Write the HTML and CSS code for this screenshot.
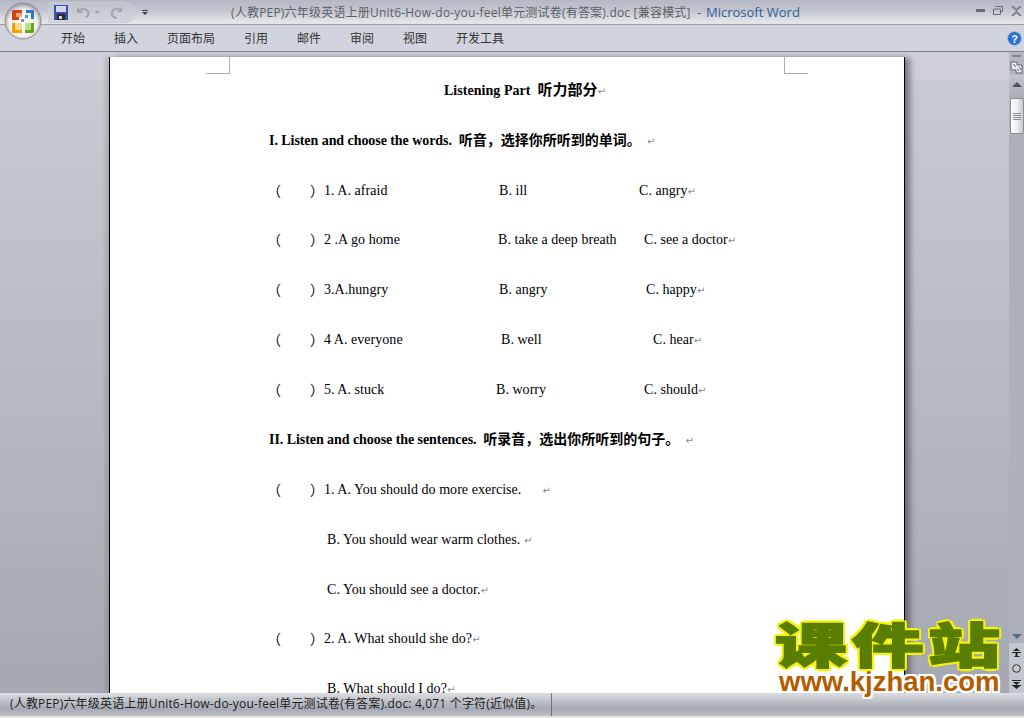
FILE: index.html
```html
<!DOCTYPE html>
<html lang="zh-CN">
<head>
  <meta charset="UTF-8">
  <title>Microsoft Word</title>
  <link rel="stylesheet" href="styles.css">
</head>
<body>
  <!-- Office button sits over title bar and ribbon -->
  <div class="office-btn">
    <svg width="38" height="38" viewBox="0 0 38 38">
      <defs>
        <radialGradient id="orb" cx="50%" cy="55%" r="55%">
          <stop offset="0" stop-color="#ffffff"/>
          <stop offset="0.7" stop-color="#f1f1ee"/>
          <stop offset="1" stop-color="#8d9099"/>
        </radialGradient>
      </defs>
      <circle cx="19" cy="19" r="18" fill="url(#orb)" stroke="#8f929a"/>
      <path d="M9 8h9v3h-6v4h3v3H8V9z" fill="#d2410f"/>
      <path d="M12 11h6v4h-6z" fill="#f0a37c"/>
      <path d="M22 8h7l1 1v8h-3v-6h-5z" fill="#2f74c9"/>
      <path d="M21 13h3v3h-3zM17 17h3v3h-3z" fill="#5a9bd8"/>
      <path d="M8 21h3v7h7v3H9l-1-1z" fill="#f2a20c"/>
      <path d="M11 21h7v7h-7z" fill="#fbd98a"/>
      <path d="M27 21h3v9l-1 1h-8v-3h6z" fill="#65a51f"/>
      <path d="M21 21h6v7h-6z" fill="#bcdd8c"/>
    </svg>
  </div>

  <header class="titlebar">
    <div class="qat">
      <svg class="ico-save" width="14" height="15" viewBox="0 0 14 15">
        <rect width="14" height="15" fill="#3e4fa8"/>
        <rect x="2" y="1" width="10" height="6" fill="#cfd8ee"/>
        <rect x="3" y="9" width="8" height="6" fill="#2a2a30"/>
        <rect x="5" y="11" width="3" height="3" fill="#d8d8d8"/>
      </svg>
      <svg class="ico-undo" width="14" height="13" viewBox="0 0 14 13">
        <path d="M1 1v6h6L5 5c2-1.500 5-1 6 1 .8 2-.4 4-2 5l2 1c2.500-1.500 3.500-4.500 2-7C11 2 7 1 3.500 3z" fill="#a2a5ae"/>
      </svg>
      <span class="caret"></span>
      <svg class="ico-redo" width="13" height="13" viewBox="0 0 13 13">
        <path d="M12 0v6H7l2-2C7 3 3.500 4 3 6.500 2.600 9 4.500 11 7 11v2C3 13 0 10 1 6c.8-3.800 6-5.600 9.500-3.300z" fill="#a2a5ae"/>
      </svg>
    </div>
    <div class="qat-more"><span class="bar"></span><span class="caret dark"></span></div>
    <div class="doc-title">(人教PEP)六年级英语上册Unit6-How-do-you-feel单元测试卷(有答案).doc [兼容模式]  -  <span class="app-name">Microsoft Word</span></div>
    <div class="win-ctrls">
      <svg width="9" height="3" viewBox="0 0 9 3"><rect width="9" height="3" fill="#6b6e75"/></svg>
      <svg width="10" height="9" viewBox="0 0 10 9"><path d="M2.500.5h7v5h-2M.5 3h7v5.500h-7z" fill="none" stroke="#6b6e75"/></svg>
      <svg width="11" height="10" viewBox="0 0 11 10"><path d="M1 0l4.500 4L10 0M1 10l4.500-4 4.500 4" fill="none" stroke="#7c8087" stroke-width="2"/></svg>
    </div>
  </header>

  <nav class="ribbon">
    <a>开始</a>
    <a>插入</a>
    <a>页面布局</a>
    <a>引用</a>
    <a>邮件</a>
    <a>审阅</a>
    <a>视图</a>
    <a>开发工具</a>
    <svg class="help" width="15" height="15" viewBox="0 0 15 15">
      <circle cx="7.500" cy="7.500" r="7" fill="#2a6fd6" stroke="#a9c3e8"/>
      <text x="7.500" y="11.500" text-anchor="middle" class="help-q">?</text>
    </svg>
  </nav>

  <div class="workspace">
    <div class="doc-area">
      <main class="page">
        <span class="crop crop-left"></span>
        <span class="crop crop-right"></span>

        <p class="line title">Listening Part  <span class="cjk big">听力部分</span><span class="mark">↵</span></p>
        <p class="line bold">I. Listen and choose the words.  <span class="cjk">听音，选择你所听到的单词。</span><span class="mark">  ↵</span></p>

        <div class="line q q1"><span class="par">（<span>）</span></span><span>1. A. afraid</span><span>B. ill</span><span>C. angry<span class="mark">↵</span></span></div>
        <div class="line q q2"><span class="par">（<span>）</span></span><span>2 .A go home</span><span>B. take a deep breath</span><span>C. see a doctor<span class="mark">↵</span></span></div>
        <div class="line q q3"><span class="par">（<span>）</span></span><span>3.A.hungry</span><span>B. angry</span><span>C. happy<span class="mark">↵</span></span></div>
        <div class="line q q4"><span class="par">（<span>）</span></span><span>4 A. everyone</span><span>B. well</span><span>C. hear<span class="mark">↵</span></span></div>
        <div class="line q q5"><span class="par">（<span>）</span></span><span>5. A. stuck</span><span>B. worry</span><span>C. should<span class="mark">↵</span></span></div>

        <p class="line bold">II. Listen and choose the sentences.  <span class="cjk">听录音，选出你所听到的句子。</span><span class="mark">  ↵</span></p>

        <div class="line q"><span class="par">（<span>）</span></span><span>1. A. You should do more exercise.      <span class="mark">↵</span></span></div>
        <p class="line sub">B. You should wear warm clothes. <span class="mark">↵</span></p>
        <p class="line sub">C. You should see a doctor.<span class="mark">↵</span></p>
        <div class="line q"><span class="par">（<span>）</span></span><span>2. A. What should she do?<span class="mark">↵</span></span></div>
        <p class="line sub tight">B. What should I do?<span class="mark">↵</span></p>
      </main>
    </div>

    <aside class="scrollbar">
      <span class="split"></span>
      <svg class="ruler-btn" width="13" height="13" viewBox="0 0 13 13">
        <path d="M1 1h6v3h5v8H6V9H1z" fill="#e9e7f0" stroke="#5f626b"/>
        <path d="M3 3l3 3M9 6l2 3M7 8l2 2" stroke="#5f626b"/>
      </svg>
      <div class="sb-up"><span class="tri-up"></span></div>
      <div class="sb-thumb"><span class="grip"></span></div>
      <div class="sb-track"></div>
      <div class="sb-down"><span class="tri-down"></span></div>
      <div class="sb-browse">
        <svg width="9" height="9" viewBox="0 0 9 9"><path d="M4.500 0L8 3H1zM0 4h9v1H0zM3.500 5h2v3h2v1h-5V8h1z" fill="#222"/></svg>
        <svg width="9" height="9" viewBox="0 0 9 9"><circle cx="4.500" cy="4.500" r="3.800" fill="#c9c9c9" stroke="#333"/></svg>
        <svg width="9" height="9" viewBox="0 0 9 9"><path d="M0 0h9v1H0zM1 2h7L4.500 5zM0 5h9v1H0zM1 6h7L4.500 9z" fill="#222"/></svg>
      </div>
    </aside>
  </div>

  <footer class="statusbar">
    <div class="status-text">(人教PEP)六年级英语上册Unit6-How-do-you-feel单元测试卷(有答案).doc: 4,071 个字符(近似值)。</div>
  </footer>

  <!-- site watermark over the screenshot -->
  <div class="watermark">
    <div class="wm-cn">课件站</div>
    <div class="wm-url">www.kjzhan.com</div>
  </div>
</body>
</html>
```

FILE: styles.css
```css
* {
  margin: 0;
  padding: 0;
  box-sizing: border-box;
}

body {
  position: relative;
  display: flex;
  flex-direction: column;
  width: 1024px;
  height: 718px;
  overflow: hidden;
  font-family: "Liberation Serif", "Noto Sans CJK SC", serif;
  background-color: #e6e4dc;
  color: #000;
}

/* Office orb */
.office-btn {
  position: absolute;
  left: 4px;
  top: 2px;
  width: 38px;
  height: 38px;
}

/* Title bar */
.titlebar {
  display: flex;
  align-items: center;
  height: 25px;
  flex-shrink: 0;
  background: linear-gradient(#b4b8c2, #c3c6cf 45%, #e2e4e8 90%);
  border-bottom: 1px solid #9a9da5;
  font-family: "Open Sans", "Noto Sans CJK SC", sans-serif;
}

.qat {
  display: flex;
  align-items: center;
  width: 88px;
  height: 21px;
  margin-left: 48px;
  padding-left: 6px;
  border: 1px solid #c9ccd3;
  border-left: 0;
  border-radius: 0 11px 11px 0;
  background: linear-gradient(#c0c3cd, #d3d6dc);
}

.ico-undo {
  margin-left: 8px;
}

.caret {
  width: 0;
  height: 0;
  margin-left: 4px;
  border: 3px solid transparent;
  border-top: 3px solid #a2a5ae;
  border-bottom: 0;
}

.caret.dark {
  display: block;
  margin: 1px 0 0;
  border-top-color: #444;
}

.ico-redo {
  margin-left: 10px;
}

.qat-more {
  width: 6px;
  margin-left: 6px;
}

.qat-more .bar {
  display: block;
  height: 1px;
  background-color: #444;
}

.doc-title {
  flex: 1;
  margin-left: 83px;
  font-size: 12px;
  letter-spacing: 0.2px;
  color: #5c5f66;
  white-space: pre;
}

.app-name {
  margin-left: -2px;
  font-size: 13px;
  letter-spacing: 0;
  color: #2f5f9e;
}

.win-ctrls {
  display: flex;
  align-items: center;
  gap: 8px;
  padding-right: 2px;
  padding-bottom: 3px;
}

/* Ribbon tabs */
.ribbon {
  display: flex;
  align-items: center;
  gap: 29px;
  height: 27px;
  flex-shrink: 0;
  padding-left: 61px;
  padding-bottom: 2px;
  background-color: #d1d4dc;
  border-bottom: 1px solid #7f8389;
  font-family: "Noto Sans CJK SC", sans-serif;
  font-size: 12px;
  color: #333;
}

.help {
  margin-left: auto;
  margin-right: 2px;
  margin-top: 2px;
}

.help-q {
  font-family: "Liberation Sans", sans-serif;
  font-size: 11px;
  font-weight: bold;
  fill: #fff;
}

/* Document area */
.workspace {
  display: flex;
  flex: 1;
  min-height: 0;
}

.doc-area {
  flex: 1;
  min-width: 0;
  overflow: hidden;
  padding: 5px 0 0 109px;
  background:
    linear-gradient(#d0cfd9, #d0cfd9) top / 100% 28px no-repeat,
    linear-gradient(#c8ccd4, #a5a8b1);
}

.page {
  position: relative;
  width: 796px;
  height: 700px;
  padding: 8px 123px 0 159px;
  background-color: #fff;
  border-left: 1px solid #000;
  border-right: 1px solid #000;
  box-shadow: 6px 0 6px -1px rgba(50, 50, 60, 0.55), -4px 0 3px rgba(70, 70, 80, 0.18);
  font-size: 14px;
  letter-spacing: 0.04px;
}

.crop {
  position: absolute;
  top: 0;
  width: 24px;
  height: 17px;
  border-bottom: 1px solid #abaeb6;
}

.crop-left {
  left: 96px;
  border-right: 1px solid #abaeb6;
}

.crop-right {
  left: 674px;
  border-left: 1px solid #abaeb6;
}

.line {
  height: 49.83px;
  line-height: 49.83px;
  white-space: pre;
}

.title {
  padding-top: 1px;
  font-weight: bold;
  text-align: center;
}

.bold {
  font-weight: bold;
  letter-spacing: -0.06px;
}

.cjk {
  font-family: "Noto Sans CJK SC", sans-serif;
  letter-spacing: 0;
}

.cjk.big {
  font-size: 15px;
  line-height: 0;
}

.mark {
  font-family: "DejaVu Sans", sans-serif;
  font-size: 10px;
  font-weight: normal;
  color: #8b8b8b;
}

/* question rows: columns shift a little per row, as in the doc */
.q {
  display: grid;
  grid-template-columns: 55px auto;
  justify-content: start;
  padding-top: 1px;
}

.q1 { grid-template-columns: 55px 175px 140px auto; }
.q2 { grid-template-columns: 55px 174px 146px auto; }
.q3 { grid-template-columns: 55px 175px 147px auto; }
.q4 { grid-template-columns: 55px 177px 152px auto; }
.q5 { grid-template-columns: 55px 172px 148px auto; }

.par {
  margin-left: -2px;
  font-family: "Noto Sans CJK SC", sans-serif;
}

.par span {
  margin-left: 29px;
}

.sub {
  padding-left: 58px;
  padding-top: 2px;
}

.sub.tight {
  padding-top: 1px;
}

/* Scrollbar */
.scrollbar {
  display: flex;
  flex-direction: column;
  align-items: center;
  width: 15px;
  flex-shrink: 0;
  background-color: #b4b7bf;
}

.split {
  width: 9px;
  height: 2px;
  margin-top: 3px;
  margin-bottom: 4px;
  background-color: #80838a;
}

.ruler-btn {
  flex-shrink: 0;
}

.sb-up {
  display: flex;
  justify-content: center;
  width: 100%;
  height: 23px;
  margin-top: 1px;
  padding-top: 7px;
  background: linear-gradient(#c0c3ca, #a9acb4);
}

.tri-up {
  width: 0;
  height: 0;
  border: 5px solid transparent;
  border-bottom: 5px solid #50535a;
  border-top: 0;
}

.sb-thumb {
  display: flex;
  align-items: center;
  justify-content: center;
  width: 14px;
  height: 36px;
  flex-shrink: 0;
  margin-left: 1px;
  background: linear-gradient(90deg, #fdfdfd, #eceef0 50%, #c6c7d2);
  border: 1px solid #8a8d94;
  border-radius: 2px;
}

.grip {
  display: block;
  width: 8px;
  height: 7px;
  background: repeating-linear-gradient(#8a8d94 0, #8a8d94 1px, transparent 1px, transparent 2px);
}

.sb-track {
  flex: 1;
  width: 100%;
  background-color: #adb0b8;
}

.sb-down {
  display: flex;
  justify-content: center;
  width: 100%;
  height: 14px;
  padding-top: 5px;
  background-color: #adb0b8;
}

.tri-down {
  width: 0;
  height: 0;
  border: 5px solid transparent;
  border-top: 5px solid #5a6a80;
  border-bottom: 0;
}

.sb-browse {
  display: flex;
  flex-direction: column;
  align-items: center;
  gap: 7px;
  width: 100%;
  height: 50px;
  padding-top: 5px;
  background-color: #c3c6cd;
}

/* Status bar */
.statusbar {
  display: flex;
  height: 23px;
  flex-shrink: 0;
  margin-bottom: 2px;
  background: linear-gradient(#dcdee2, #b6b9c0 45%, #a7aab2 70%, #bdc0c6);
  font-family: "Open Sans", "Noto Sans CJK SC", sans-serif;
  font-size: 12px;
  letter-spacing: 0.18px;
  color: #1e1e1e;
}

.status-text {
  width: 552px;
  padding-left: 10px;
  line-height: 21px;
  border-right: 1px solid #6f7279;
  white-space: pre;
}

/* Watermark */
.watermark {
  position: absolute;
  left: 775px;
  top: 615px;
  width: 232px;
}

.wm-cn {
  width: 160px;
  height: 56px;
  font-family: "Noto Sans CJK SC", sans-serif;
  font-size: 48px;
  font-weight: 900;
  line-height: 55px;
  letter-spacing: 3px;
  white-space: nowrap;
  color: #5a7d00;
  -webkit-text-stroke: 1.5px #5a7d00;
  text-shadow: 2px 0 #f4f400, -2px 0 #f4f400, 0 3px #f4f400, 0 -3px #f4f400, 2px 2px #f4f400, -2px 2px #f4f400, 2px -2px #f4f400, -2px -2px #f4f400;
  transform: scaleX(1.5);
  transform-origin: left center;
}

.wm-url {
  padding-left: 4px;
  font-family: "Liberation Sans", sans-serif;
  font-size: 27.5px;
  font-weight: bold;
  line-height: 21px;
  color: #b35c00;
  white-space: nowrap;
  text-shadow: 2px 0 #fff, -2px 0 #fff, 0 2px #fff, 0 -2px #fff, 2px 2px #fff, -2px 2px #fff, 2px -2px #fff, -2px -2px #fff;
}
```
